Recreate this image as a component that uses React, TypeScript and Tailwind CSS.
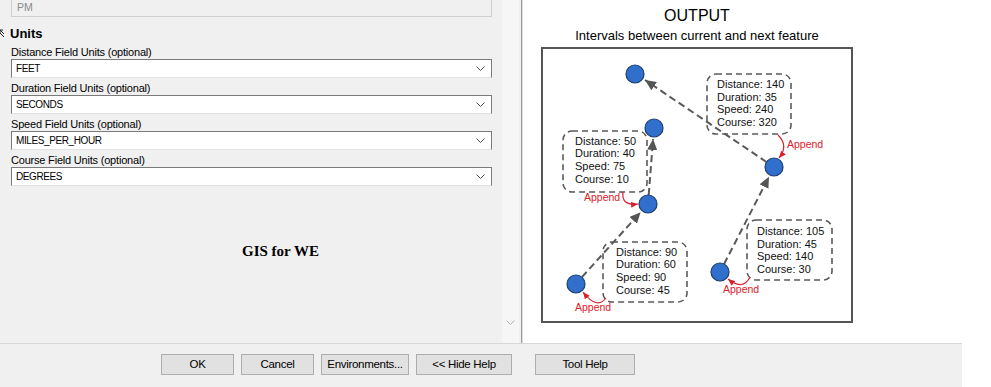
import { ReactNode } from "react";

const fields = [
  { label: "Distance Field Units (optional)", value: "FEET" },
  { label: "Duration Field Units (optional)", value: "SECONDS" },
  { label: "Speed Field Units (optional)", value: "MILES_PER_HOUR" },
  { label: "Course Field Units (optional)", value: "DEGREES" },
];

const buttons = [
  { text: "OK", w: "w-[73px]" },
  { text: "Cancel", w: "w-[73px]" },
  { text: "Environments...", w: "w-[88px]" },
  { text: "<< Hide Help", w: "w-[96px]" },
];

const Chevron = ({ color = "#4a4a4a" }: { color?: string }) => (
  <svg width="9" height="5" viewBox="0 0 9 5">
    <polyline points="0.5,0.5 4.5,4.5 8.5,0.5" fill="none" stroke={color} strokeWidth="1" />
  </svg>
);

const FieldRow = ({ label, value }: { label: string; value: string }) => (
  <div className="pt-[3px]">
    <div className="h-[14px] leading-[14px] text-[11px] tracking-[-0.2px] text-black">{label}</div>
    <div className="h-[19px] flex items-center justify-between bg-white border-t border-x border-[#7a7a7a] border-b border-b-[#e2e2e2] pl-[4px] pr-[6px]">
      <span className="text-[10px] tracking-[-0.4px] text-black">{value}</span>
      <Chevron />
    </div>
  </div>
);

// dashed info box with its lines of text
const InfoBox = ({ x, y, w, h, tx, ty, lines }: { x: number; y: number; w: number; h: number; tx: number; ty: number; lines: string[] }) => (
  <g>
    <rect x={x} y={y} width={w} height={h} rx="9" fill="none" stroke="#5a5a5a" strokeWidth="1.6" strokeDasharray="6 4" />
    {lines.map((l, i) => (
      <text key={i} x={tx} y={ty + i * 12.7} fontSize="11" fill="#111">
        {l}
      </text>
    ))}
  </g>
);

const Dot = ({ cx, cy }: { cx: number; cy: number }) => (
  <circle cx={cx} cy={cy} r="9" fill="#3070cc" stroke="#1d3d70" strokeWidth="1.2" />
);

const Append = ({ d, x, y }: { d: string; x: number; y: number }): ReactNode => (
  <g>
    <path d={d} fill="none" stroke="#d9202a" strokeWidth="1.2" markerEnd="url(#rh)" />
    <text x={x} y={y} fontSize="10.5" fill="#e0202a">
      Append
    </text>
  </g>
);

const Diagram = () => (
  <svg width="308" height="272" viewBox="543 49 308 272" style={{ fontFamily: '"Liberation Sans", Arial, sans-serif' }}>
    <defs>
      <marker id="gh" viewBox="0 0 11 10" refX="11" refY="5" markerWidth="11" markerHeight="10" markerUnits="userSpaceOnUse" orient="auto">
        <path d="M0,0 L11,5 L0,10 z" fill="#555" />
      </marker>
      <marker id="rh" viewBox="0 0 7 6" refX="7" refY="3" markerWidth="7" markerHeight="6" markerUnits="userSpaceOnUse" orient="auto">
        <path d="M0,0 L7,3 L0,6 z" fill="#d9202a" />
      </marker>
    </defs>

    <g stroke="#5a5a5a" strokeWidth="2" strokeDasharray="7 4" fill="none">
      <path d="M766.5,162 L645,80" markerEnd="url(#gh)" />
      <path d="M648.7,195 L653.1,139" markerEnd="url(#gh)" />
      <path d="M582,277 L640.6,212.2" markerEnd="url(#gh)" />
      <path d="M724.1,264 L769,176.8" markerEnd="url(#gh)" />
    </g>

    <InfoBox x={707} y={74} w={84} h={60} tx={717} ty={88} lines={["Distance: 140", "Duration: 35", "Speed: 240", "Course: 320"]} />
    <InfoBox x={563} y={131} w={84} h={61} tx={575} ty={144.5} lines={["Distance: 50", "Duration: 40", "Speed: 75", "Course: 10"]} />
    <InfoBox x={603} y={242} w={84} h={60} tx={616} ty={255.5} lines={["Distance: 90", "Duration: 60", "Speed: 90", "Course: 45"]} />
    <InfoBox x={747} y={220} w={85} h={60} tx={757} ty={235} lines={["Distance: 105", "Duration: 45", "Speed: 140", "Course: 30"]} />

    <Append d="M778,135 Q789,146 779,158" x={787} y={148} />
    <Append d="M623,192 Q621,206 638,204" x={584} y={200.5} />
    <Append d="M606,298 Q597,310 583,292" x={575} y={310.5} />
    <Append d="M750,277 Q743,291 728,279" x={723} y={293} />

    <Dot cx={635} cy={74} />
    <Dot cx={654} cy={128} />
    <Dot cx={774} cy={167} />
    <Dot cx={648} cy={204} />
    <Dot cx={576} cy={284} />
    <Dot cx={720} cy={272} />
  </svg>
);

export default function App() {
  return (
    <div
      className="w-[991px] h-[387px] overflow-hidden bg-white flex flex-col"
      style={{ fontFamily: '"Liberation Sans", Arial, sans-serif' }}
    >
      {/* upper area: parameters + help */}
      <div className="h-[343px] flex">
        <div className="w-[502px] bg-[#f0f0f0] pl-[11px] pr-[10px] flex flex-col">
          <div className="h-[17px] border-x border-b border-[#cfcfcf] pl-[5px] leading-[14px] text-[10.5px] text-[#8a8a8a]">PM</div>
          <div className="mt-[8px] h-[17px] -ml-[11px] flex items-center gap-[5px]">
            <svg width="5" height="9" viewBox="0 0 5 9">
              <path d="M0,1 L4,5 M0,1 L3,1 M0,1 L0,4 M0,4 L4,8" fill="none" stroke="#222" strokeWidth="1" />
            </svg>
            <span className="text-[13px] font-bold text-black leading-[17px]">Units</span>
          </div>
          {fields.map((f) => (
            <FieldRow key={f.label} label={f.label} value={f.value} />
          ))}
          <div className="mt-[57px] ml-[231px] text-[15px] font-bold leading-[17px] text-black" style={{ fontFamily: '"Liberation Serif", "Times New Roman", serif' }}>
            GIS for WE
          </div>
        </div>
        {/* scrollbar */}
        <div className="w-[17px] bg-[#f6f6f6] flex flex-col justify-end items-center pb-[18px]">
          <Chevron color="#b0b0b0" />
        </div>
        <div className="w-[2px] bg-[#f0f0f0]" />
        <div className="w-[2px] bg-[#9c9c9c] border-r border-[#dcdcdc]" />
        {/* help panel */}
        <div className="flex-1 bg-white pl-[18px] flex flex-col">
          <div className="w-[312px] text-center">
            <div className="h-[20px] mt-[6px] leading-[20px] text-[16px] text-black">OUTPUT</div>
            <div className="h-[16px] mt-[2px] leading-[16px] text-[13px] text-black">Intervals between current and next feature</div>
          </div>
          <div className="mt-[3px] w-[312px] h-[276px] border-2 border-[#555]">
            <Diagram />
          </div>
        </div>
      </div>

      {/* button bar */}
      <div className="h-[44px] flex">
        <div className="w-[962px] bg-[#f0f0f0] border-t border-[#d8d8d8] flex items-start pt-[10px]">
          <div className="ml-[161px] flex gap-[7px]">
            {buttons.map((b) => (
              <div key={b.text} className={`${b.w} h-[21px] bg-[#e1e1e1] border border-[#adadad] flex items-center justify-center text-[11.5px] tracking-[-0.3px] text-black`}>
                {b.text}
              </div>
            ))}
          </div>
          <div className="ml-[23px] w-[100px] h-[21px] bg-[#e1e1e1] border border-[#adadad] flex items-center justify-center text-[11.5px] tracking-[-0.3px] text-black">
            Tool Help
          </div>
        </div>
        <div className="flex-1 bg-white" />
      </div>
    </div>
  );
}
